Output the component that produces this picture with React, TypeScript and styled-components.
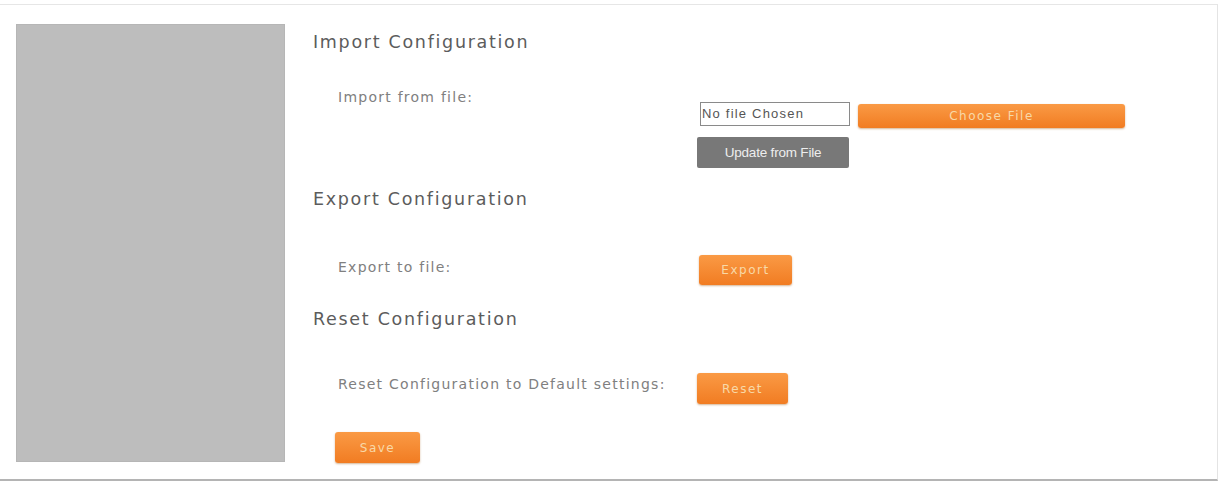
import React from 'react';
import styled, { createGlobalStyle } from 'styled-components';

const GlobalStyle = createGlobalStyle`
  body {
    margin: 0;
    background: #ffffff;
    font-family: "DejaVu Sans", Verdana, sans-serif;
  }
`;

const Frame = styled.div`
  box-sizing: border-box;
  width: 1218px;
  height: 477px;
  margin-top: 4px;
  border-top: 1px solid #e6e6e6;
  border-right: 1px solid #e4e4e4;
  border-bottom: 2px solid #b4b4b4;
  padding: 19px 0 0 16px;
  display: flex;
`;

const Sidebar = styled.div`
  box-sizing: border-box;
  width: 269px;
  height: 438px;
  background: #bdbdbd;
  border: 1px solid #b6b6b6;
  flex-shrink: 0;
`;

const Main = styled.div`
  margin-left: 28px;
  display: flex;
  flex-direction: column;
`;

const Heading = styled.h2<{ $gap: number }>`
  margin: ${p => p.$gap}px 0 0;
  font-size: 17.5px;
  font-weight: normal;
  line-height: 36px;
  color: #5c5c5c;
  letter-spacing: 1.7px;
`;

const Row = styled.div<{ $gap: number }>`
  display: flex;
  align-items: flex-start;
  margin-top: ${p => p.$gap}px;
`;

const Label = styled.div<{ $offset: number }>`
  box-sizing: border-box;
  width: 384px;
  padding-left: 25px;
  margin-top: ${p => p.$offset}px;
  font-size: 14px;
  line-height: 22px;
  color: #808080;
  letter-spacing: 1.25px;
  white-space: nowrap;
  flex-shrink: 0;
`;

const Controls = styled.div<{ $offset?: number }>`
  display: flex;
  flex-direction: column;
  gap: 9px;
  margin-top: ${p => p.$offset ?? 0}px;
`;

const FileLine = styled.div`
  display: flex;
  align-items: flex-start;
  gap: 8px;
  margin-left: 3px;
`;

const FileField = styled.div`
  box-sizing: border-box;
  width: 150px;
  height: 24px;
  border: 1px solid #8a8a8a;
  padding: 0 1px;
  font-family: "Liberation Sans", Arial, sans-serif;
  font-size: 13px;
  letter-spacing: 1.2px;
  line-height: 22px;
  color: #555555;
  white-space: nowrap;
  overflow: hidden;
`;

const OrangeButton = styled.button<{ $width: number; $height: number }>`
  box-sizing: border-box;
  width: ${p => p.$width}px;
  height: ${p => p.$height}px;
  border: none;
  border-radius: 3px;
  background: linear-gradient(#fa9a45, #f17c22);
  box-shadow: 0 1px 2px rgba(160, 90, 20, 0.45);
  color: #f8d9a8;
  font-family: "DejaVu Sans", Verdana, sans-serif;
  font-size: 12px;
  letter-spacing: 1.5px;
  padding: 0;
  cursor: pointer;
`;

const GrayButton = styled.button`
  box-sizing: border-box;
  width: 152px;
  height: 31px;
  border: none;
  border-radius: 2px;
  background: #787878;
  color: #eeeeee;
  font-family: "Liberation Sans", Arial, sans-serif;
  font-size: 13.5px;
  letter-spacing: -0.2px;
  padding: 0;
  cursor: pointer;
`;

const SaveRow = styled.div`
  margin-top: 28px;
  padding-left: 22px;
`;

export default function App() {
  return (
    <>
      <GlobalStyle />
      <Frame>
        <Sidebar />
        <Main>
          <Heading $gap={0}>Import Configuration</Heading>
          <Row $gap={26}>
            <Label $offset={0}>Import from file:</Label>
            <Controls $offset={16}>
              <FileLine>
                <FileField>No file Chosen</FileField>
                <OrangeButton $width={267} $height={24} style={{ marginTop: 2 }}>
                  Choose File
                </OrangeButton>
              </FileLine>
              <GrayButton>Update from File</GrayButton>
            </Controls>
          </Row>

          <Heading $gap={13}>Export Configuration</Heading>
          <Row $gap={38}>
            <Label $offset={1}>Export to file:</Label>
            <Controls>
              <OrangeButton $width={93} $height={30} style={{ marginLeft: 2 }}>
                Export
              </OrangeButton>
            </Controls>
          </Row>

          <Heading $gap={16}>Reset Configuration</Heading>
          <Row $gap={36}>
            <Label $offset={0}>Reset Configuration to Default settings:</Label>
            <Controls>
              <OrangeButton $width={91} $height={31}>
                Reset
              </OrangeButton>
            </Controls>
          </Row>

          <SaveRow>
            <OrangeButton $width={85} $height={31}>Save</OrangeButton>
          </SaveRow>
        </Main>
      </Frame>
    </>
  );
}
